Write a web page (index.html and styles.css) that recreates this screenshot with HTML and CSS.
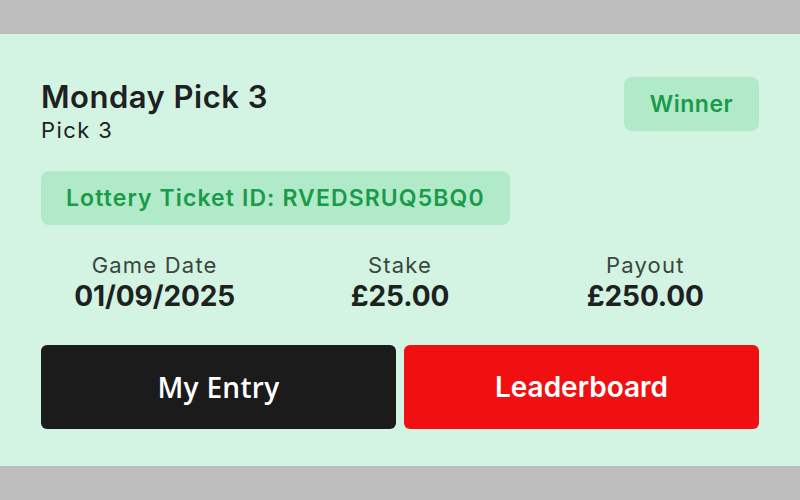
FILE: index.html
```html
<!DOCTYPE html>
<html>
<head>
<meta charset="utf-8">
<link rel="stylesheet" href="styles.css">
</head>
<body>
<div class="card">
  <div class="head">
    <div class="titles">
      <div class="title">Monday Pick 3</div>
      <div class="subtitle">Pick 3</div>
    </div>
    <div class="badge">Winner</div>
  </div>
  <div class="ticket">Lottery Ticket ID: RVEDSRUQ5BQ0</div>
  <div class="stats">
    <div class="stat"><div class="label">Game Date</div><div class="value">01/09/2025</div></div>
    <div class="stat"><div class="label">Stake</div><div class="value">£25.00</div></div>
    <div class="stat"><div class="label">Payout</div><div class="value">£250.00</div></div>
  </div>
  <div class="actions">
    <div class="btn btn-dark">My Entry</div>
    <div class="btn btn-red">Leaderboard</div>
  </div>
</div>
</body>
</html>
```
FILE: styles.css
```css
html, body {
  margin: 0;
  padding: 0;
  background: #bdbdbd;
  font-family: Inter, "Noto Sans", sans-serif;
}
body {
  padding-top: 34px;
  height: 500px;
  box-sizing: border-box;
}
.card {
  background: #d3f4e2;
  height: 432px;
  box-sizing: border-box;
  padding: 44px 41px 37px 41px;
  display: flex;
  flex-direction: column;
}
.head {
  display: flex;
  justify-content: space-between;
  align-items: flex-start;
}
.title {
  font-size: 31px;
  font-weight: 600;
  color: #1d211f;
  line-height: 38px;
  letter-spacing: 0.5px;
}
.subtitle {
  font-size: 22px;
  font-weight: 400;
  color: #1d211f;
  line-height: 28px;
  letter-spacing: 1.4px;
}
.badge {
  margin-top: -1px;
  width: 135px;
  height: 54px;
  box-sizing: border-box;
  background: #b1eac8;
  border-radius: 8px;
  color: #199b4a;
  font-size: 23px;
  font-weight: 600;
  letter-spacing: 0.5px;
  display: flex;
  align-items: center;
  justify-content: center;
}
.ticket {
  align-self: flex-start;
  margin-top: 27px;
  height: 54px;
  box-sizing: border-box;
  padding: 0 25px;
  background: #b1eac8;
  border-radius: 8px;
  color: #199b4a;
  font-size: 23px;
  font-weight: 600;
  letter-spacing: 1.1px;
  display: flex;
  align-items: center;
}
.stats {
  display: grid;
  grid-template-columns: 1fr 1fr 1fr;
  margin: 26px -9px 0 -9px;
}
.stat {
  text-align: center;
}
.label {
  font-size: 22px;
  color: #3a463f;
  line-height: 28px;
  letter-spacing: 1.2px;
}
.value {
  font-size: 28px;
  font-weight: 700;
  color: #1d211f;
  line-height: 34px;
  letter-spacing: -0.1px;
}
.actions {
  margin-top: auto;
  display: flex;
  gap: 8px;
}
.btn {
  flex: 1;
  height: 84px;
  border-radius: 6px;
  display: flex;
  align-items: center;
  justify-content: center;
  color: #ffffff;
  font-size: 28px;
  font-weight: 600;
}
.btn-dark {
  background: #1b1b1b;
  font-family: "Open Sans", sans-serif;
  letter-spacing: 0.3px;
}
.btn-red {
  background: #f01011;
}
```
